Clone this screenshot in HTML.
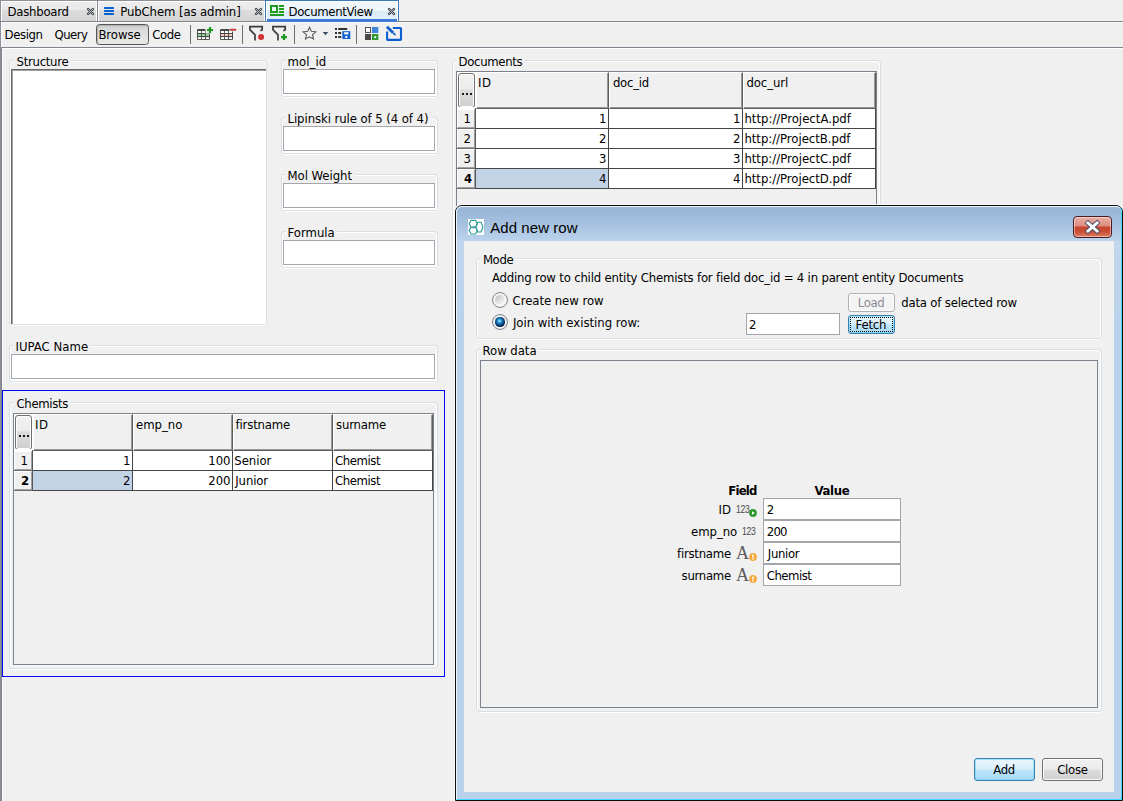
<!DOCTYPE html>
<html><head><meta charset="utf-8"><title>DocumentView</title><style>
*{box-sizing:border-box;margin:0;padding:0}
html,body{width:1123px;height:801px;overflow:hidden}
body{position:relative;background:#f0f0f0;font-family:"DejaVu Sans Condensed", "Liberation Sans", sans-serif;font-size:13px;color:#000;line-height:16px}
.a{position:absolute}
.t{position:absolute;white-space:nowrap;line-height:16px;height:16px;z-index:2}
.gs{position:absolute;border:1px solid #d5dfe5;border-radius:3px}
.gw{position:absolute;border:1px solid #fff;border-radius:3px}
.gt{position:absolute;background:#f0f0f0;height:12px}
.tf{position:absolute;background:#fff;border:1px solid #a5a6a9}
.hc{position:absolute;background:#f0f0f0;border-top:1px solid #fff;border-left:1px solid #fff;border-right:1px solid #5e5e5e;border-bottom:1px solid #5e5e5e;box-shadow:inset -1px -1px 0 #989898}
.rh{position:absolute;background:#f0f0f0;border-top:1px solid #fff;border-left:1px solid #fff;border-right:1px solid #a0a0a0;border-bottom:1px solid #a0a0a0}
.cell{position:absolute;background:#fff}
.btn{position:absolute;border:1px solid #707070;border-radius:3px;background:linear-gradient(#f2f2f2 0,#ebebeb 48%,#dddddd 52%,#cfcfcf 100%);box-shadow:inset 0 0 0 1px #fcfcfc}
</style></head>
<body>
<div class="a" style="left:0px;top:0px;width:1px;height:801px;background:#8c8f98"></div>
<div class="a" style="left:1px;top:0px;width:1px;height:47px;background:#fff"></div>
<div class="a" style="left:1px;top:47px;width:1px;height:754px;background:#7d828e"></div>
<div class="a" style="left:2px;top:48px;width:1px;height:753px;background:#fff"></div>
<div class="a" style="left:0px;top:0px;width:265px;height:1px;background:#8e9097"></div>
<div class="a" style="left:1px;top:1px;width:264px;height:1px;background:#fff"></div>
<div class="a" style="left:0px;top:21px;width:1123px;height:1px;background:#80848e"></div>
<div class="a" style="left:2px;top:22px;width:1121px;height:1px;background:#fafafa"></div>
<div class="a" style="left:2px;top:2px;width:94px;height:19px;background:linear-gradient(#ededed 0,#e9e9e9 42%,#dcdcdc 43%,#d4d4d4 100%)"></div>
<div class="a" style="left:96px;top:1px;width:1px;height:20px;background:#fff"></div>
<div class="a" style="left:97px;top:0px;width:1px;height:22px;background:#80848e"></div>
<div class="a" style="left:98px;top:1px;width:1px;height:20px;background:#fff"></div>
<div class="a" style="left:99px;top:2px;width:165px;height:19px;background:linear-gradient(#ededed 0,#e9e9e9 42%,#dcdcdc 43%,#d4d4d4 100%)"></div>
<div class="a" style="left:264px;top:1px;width:1px;height:20px;background:#fff"></div>
<div class="a" style="left:265px;top:0px;width:134px;height:21px;border:1px solid #3a7ab5;border-bottom:none;background:#fff"></div>
<div class="a" style="left:267px;top:2px;width:130px;height:19px;background:linear-gradient(#f1f8fc 0,#eef6fb 47%,#dcecf7 50%,#e2eff8 100%)"></div>
<div class="a" style="left:267px;top:19px;width:130px;height:3px;background:#3d7bd8"></div>
<div class="a" style="left:399px;top:0px;width:724px;height:21px;background:#f0f0f0"></div>
<svg class="a" style="left:86px;top:7px" width="9" height="9" viewBox="0 0 9 9"><path d="M2 2 L7 7 M7 2 L2 7" stroke="#3b3f4a" stroke-width="2.400" stroke-linecap="round" fill="none"/><path d="M2 2 L7 7 M7 2 L2 7" stroke="#e4e4e4" stroke-width=".7" stroke-linecap="round" fill="none"/></svg>
<svg class="a" style="left:254px;top:7px" width="9" height="9" viewBox="0 0 9 9"><path d="M2 2 L7 7 M7 2 L2 7" stroke="#3b3f4a" stroke-width="2.400" stroke-linecap="round" fill="none"/><path d="M2 2 L7 7 M7 2 L2 7" stroke="#e4e4e4" stroke-width=".7" stroke-linecap="round" fill="none"/></svg>
<svg class="a" style="left:387px;top:7px" width="9" height="9" viewBox="0 0 9 9"><path d="M2 2 L7 7 M7 2 L2 7" stroke="#3b3f4a" stroke-width="2.400" stroke-linecap="round" fill="none"/><path d="M2 2 L7 7 M7 2 L2 7" stroke="#e4e4e4" stroke-width=".7" stroke-linecap="round" fill="none"/></svg>
<div class="t" style="left:7.60px;top:4px;letter-spacing:-0.251px;">Dashboard</div>
<div class="t" style="left:120.20px;top:4px;letter-spacing:-0.103px;">PubChem [as admin]</div>
<div class="t" style="left:288.60px;top:4px;letter-spacing:-0.342px;">DocumentView</div>
<svg class="a" style="left:104px;top:7px" width="10" height="8" viewBox="0 0 10 8"><g fill="#0a62d0"><rect x="0" y="0" width="10" height="2" rx=".6"/><rect x="0" y="3" width="10" height="2" rx=".6"/><rect x="0" y="6" width="10" height="2" rx=".6"/></g></svg>
<svg class="a" style="left:270px;top:5px" width="14" height="11" viewBox="0 0 14 11"><g fill="#1e9a1e"><path d="M0 0H8V8H0Z M2 2V6H6V2Z" fill-rule="evenodd"/><rect x="9" y="0" width="5" height="2"/><rect x="9" y="3" width="5" height="2"/><rect x="9" y="6" width="5" height="2"/><rect x="0" y="9" width="14" height="2"/></g></svg>
<div class="a" style="left:1px;top:47px;width:1122px;height:1px;background:#80848e"></div>
<div class="a" style="left:2px;top:48px;width:1121px;height:1px;background:#fff"></div>
<div class="t" style="left:4.60px;top:27px;letter-spacing:-0.395px;">Design</div>
<div class="t" style="left:54.50px;top:27px;letter-spacing:-0.532px;">Query</div>
<div class="a" style="left:96px;top:24px;width:53px;height:21px;border:1px solid #565656;border-radius:3.500px;background:linear-gradient(#cdcdcd 0,#dcdcdc 25%,#e9e9e9 100%);box-shadow:inset 1px 1px 1px #b0b0b0"></div>
<div class="t" style="left:98.40px;top:27px;letter-spacing:-0.053px;">Browse</div>
<div class="t" style="left:152.30px;top:27px;letter-spacing:-0.418px;">Code</div>
<div class="a" style="left:190px;top:25px;width:1px;height:19px;background:#6e6e6e"></div>
<div class="a" style="left:242px;top:25px;width:1px;height:19px;background:#6e6e6e"></div>
<div class="a" style="left:294px;top:25px;width:1px;height:19px;background:#6e6e6e"></div>
<div class="a" style="left:356px;top:25px;width:1px;height:19px;background:#6e6e6e"></div>
<svg class="a" style="left:197px;top:27px" width="17" height="14" viewBox="0 0 17 14"><rect x="0" y="2" width="13" height="11" rx="1.200" fill="#474747"/><rect x="0.9" y="4.0" width="3.100" height="2" fill="#fff"/><rect x="4.85" y="4.0" width="3.100" height="2" fill="#fff"/><rect x="8.9" y="4.0" width="3.100" height="2" fill="#fff"/><rect x="0.9" y="7.0" width="3.100" height="2" fill="#8fd6a0"/><rect x="4.85" y="7.0" width="3.100" height="2" fill="#8fd6a0"/><rect x="8.9" y="7.0" width="3.100" height="2" fill="#8fd6a0"/><rect x="0.9" y="10.1" width="3.100" height="2" fill="#fff"/><rect x="4.85" y="10.1" width="3.100" height="2" fill="#fff"/><rect x="8.9" y="10.1" width="3.100" height="2" fill="#fff"/><rect x="8.500" y="0" width="8.500" height="6.500" fill="#f0f0f0"/><path d="M13 0 V6 M10 3 H16" stroke="#1e9622" stroke-width="2.200" fill="none"/></svg>
<svg class="a" style="left:220px;top:27px" width="17" height="14" viewBox="0 0 17 14"><rect x="0" y="2" width="13" height="11" rx="1.200" fill="#474747"/><rect x="0.9" y="4.0" width="3.100" height="2" fill="#fff"/><rect x="4.85" y="4.0" width="3.100" height="2" fill="#fff"/><rect x="8.9" y="4.0" width="3.100" height="2" fill="#fff"/><rect x="0.9" y="7.0" width="3.100" height="2" fill="#f6c8c0"/><rect x="4.85" y="7.0" width="3.100" height="2" fill="#f6c8c0"/><rect x="8.9" y="7.0" width="3.100" height="2" fill="#f6c8c0"/><rect x="0.9" y="10.1" width="3.100" height="2" fill="#fff"/><rect x="4.85" y="10.1" width="3.100" height="2" fill="#fff"/><rect x="8.9" y="10.1" width="3.100" height="2" fill="#fff"/><rect x="9.500" y="0" width="7.500" height="4.500" fill="#f0f0f0"/><rect x="10" y="1.800" width="6.200" height="1.900" fill="#cf3838"/></svg>
<svg class="a" style="left:249px;top:25px" width="17" height="17" viewBox="0 0 17 17"><path d="M11.400 5.800 L13.200 4.800 V1.700 H0.900 V4.600 L6 9.800 V15.400" stroke="#3c3c3c" stroke-width="1.700" fill="none" stroke-linejoin="miter"/><circle cx="12.100" cy="11.900" r="3" fill="#d03034"/></svg>
<svg class="a" style="left:272px;top:25px" width="17" height="17" viewBox="0 0 17 17"><path d="M11.400 5.800 L13.200 4.800 V1.700 H0.900 V4.600 L6 9.800 V15.400" stroke="#3c3c3c" stroke-width="1.700" fill="none" stroke-linejoin="miter"/><path d="M12 9.100 V15.100 M9 12.100 H15" stroke="#1e9622" stroke-width="2.200" fill="none"/></svg>
<svg class="a" style="left:301px;top:25px" width="17" height="16" viewBox="0 0 17 16"><path d="M8.500 2.300 L10.300 6.300 L14.900 6.800 L11.500 9.700 L12.500 14 L8.500 11.800 L4.500 14 L5.500 9.700 L2.100 6.800 L6.700 6.300 Z" fill="none" stroke="#5a5a5a" stroke-width="1.100" stroke-linejoin="miter"/></svg>
<svg class="a" style="left:322px;top:32px" width="7" height="4" viewBox="0 0 7 4"><path d="M0.700 0 H6.300 L3.500 3.300Z" fill="#3b4a63"/></svg>
<svg class="a" style="left:335px;top:27px" width="16" height="13" viewBox="0 0 16 13"><g fill="#333"><rect x="0" y="1" width="2" height="2"/><rect x="0" y="5" width="2" height="2"/><rect x="0" y="9" width="2" height="2"/><rect x="3.200" y="1" width="9" height="2"/><rect x="3.200" y="5" width="3" height="2"/><rect x="3.200" y="9" width="3" height="2"/></g><rect x="7.300" y="4.200" width="8" height="7.800" fill="#1262d3"/><rect x="9.200" y="5.200" width="4.200" height="2.200" fill="#fff"/><rect x="10.300" y="9" width="2" height="2" fill="#fff"/></svg>
<svg class="a" style="left:365px;top:27px" width="14" height="13" viewBox="0 0 14 13"><rect x="0.500" y="0.500" width="5" height="5" fill="#fff" stroke="#555" stroke-width="1"/><rect x="7" y="0" width="6.300" height="6" fill="#3d86db"/><rect x="0" y="7" width="6" height="6" fill="#4a4a4a"/><rect x="7" y="7" width="6.300" height="6" fill="#2a9a2e"/><rect x="9.200" y="9.200" width="2" height="2" fill="#fff"/></svg>
<svg class="a" style="left:385px;top:25px" width="18" height="17" viewBox="0 0 18 17"><path d="M7.900 3 H15.200 Q16 3 16 3.800 V14.100 Q16 14.900 15.200 14.900 H2.900 Q2.100 14.900 2.100 14.100 V6.500" fill="none" stroke="#0a5fd0" stroke-width="2.100"/><path d="M1.900 1.700 L8.100 7.800" stroke="#0a5fd0" stroke-width="2.700"/><path d="M8.700 8.400 L10 9.600" stroke="#0a5fd0" stroke-width="1.700" stroke-linecap="round"/></svg>
<div class="gw" style="left:10px;top:61px;width:256px;height:265px;"></div>
<div class="gs" style="left:9px;top:60px;width:258px;height:265px;"></div>
<div class="gt" style="left:14px;top:56px;width:57px;height:8px;"></div>
<div class="t" style="left:16.50px;top:54px;letter-spacing:-0.272px;">Structure</div>
<div class="a" style="left:11px;top:69px;width:255px;height:255px;background:#fff;border-top:2px solid;border-left:2px solid;border-color:#696969;box-shadow:inset 1px 1px 0 #a0a0a000"></div>
<div class="a" style="left:11px;top:69px;width:255px;height:1px;background:#696969"></div>
<div class="a" style="left:12px;top:70px;width:254px;height:1px;background:#a0a0a0"></div>
<div class="a" style="left:11px;top:69px;width:1px;height:255px;background:#696969"></div>
<div class="a" style="left:12px;top:70px;width:1px;height:254px;background:#a0a0a0"></div>
<div class="gw" style="left:282px;top:61px;width:155px;height:37px;"></div>
<div class="gs" style="left:281px;top:60px;width:157px;height:37px;"></div>
<div class="gt" style="left:286px;top:56px;width:42px;height:8px;"></div>
<div class="t" style="left:287.50px;top:54px;letter-spacing:0.060px;">mol_id</div>
<div class="a" style="left:283px;top:69px;width:154px;height:27px;background:#fff"></div>
<div class="tf" style="left:283px;top:69px;width:152px;height:25px;"></div>
<div class="gw" style="left:282px;top:118px;width:155px;height:37px;"></div>
<div class="gs" style="left:281px;top:117px;width:157px;height:37px;"></div>
<div class="gt" style="left:286px;top:113px;width:144px;height:8px;"></div>
<div class="t" style="left:287.50px;top:111px;letter-spacing:-0.075px;">Lipinski rule of 5 (4 of 4)</div>
<div class="a" style="left:283px;top:126px;width:154px;height:27px;background:#fff"></div>
<div class="tf" style="left:283px;top:126px;width:152px;height:25px;"></div>
<div class="gw" style="left:282px;top:175px;width:155px;height:37px;"></div>
<div class="gs" style="left:281px;top:174px;width:157px;height:37px;"></div>
<div class="gt" style="left:286px;top:170px;width:69px;height:8px;"></div>
<div class="t" style="left:287.50px;top:168px;letter-spacing:-0.045px;">Mol Weight</div>
<div class="a" style="left:283px;top:183px;width:154px;height:27px;background:#fff"></div>
<div class="tf" style="left:283px;top:183px;width:152px;height:25px;"></div>
<div class="gw" style="left:282px;top:232px;width:155px;height:37px;"></div>
<div class="gs" style="left:281px;top:231px;width:157px;height:37px;"></div>
<div class="gt" style="left:286px;top:227px;width:51px;height:8px;"></div>
<div class="t" style="left:287.50px;top:225px;letter-spacing:0.005px;">Formula</div>
<div class="a" style="left:283px;top:240px;width:154px;height:27px;background:#fff"></div>
<div class="tf" style="left:283px;top:240px;width:152px;height:25px;"></div>
<div class="gw" style="left:10px;top:346px;width:427px;height:37px;"></div>
<div class="gs" style="left:9px;top:345px;width:429px;height:37px;"></div>
<div class="gt" style="left:14px;top:341px;width:76px;height:8px;"></div>
<div class="t" style="left:15.40px;top:339px;letter-spacing:0.045px;">IUPAC Name</div>
<div class="a" style="left:11px;top:354px;width:426px;height:27px;background:#fff"></div>
<div class="tf" style="left:11px;top:354px;width:424px;height:25px;"></div>
<div class="a" style="left:2px;top:390px;width:443px;height:287px;border:1px solid #0000ff"></div>
<div class="gw" style="left:10px;top:403px;width:427px;height:267px;"></div>
<div class="gs" style="left:9px;top:402px;width:429px;height:267px;"></div>
<div class="gt" style="left:14px;top:398px;width:57px;height:8px;"></div>
<div class="t" style="left:16.50px;top:396px;letter-spacing:-0.344px;">Chemists</div>
<div class="a" style="left:13px;top:413px;width:423px;height:254px;background:#f6f6f6"></div>
<div class="a" style="left:13px;top:413px;width:421px;height:252px;border:1px solid #7b828e;background:#f0f0f0"></div>
<div class="a" style="left:14px;top:414px;width:419px;height:36px;background:#fff"></div>
<div class="btn" style="left:15px;top:415px;width:17px;height:35px;border-radius:3px;background:linear-gradient(#f2f2f2 0,#ebebeb 45%,#dddddd 48%,#cfcfcf 100%)"></div>
<div class="a" style="left:19px;top:435px;width:2px;height:2px;background:#1a1a1a"></div>
<div class="a" style="left:23px;top:435px;width:2px;height:2px;background:#1a1a1a"></div>
<div class="a" style="left:27px;top:435px;width:2px;height:2px;background:#1a1a1a"></div>
<div class="a" style="left:32px;top:450px;width:401px;height:41px;background:#444"></div>
<div class="a" style="left:14px;top:470px;width:18px;height:21px;background:#707070"></div>
<div class="a" style="left:32px;top:450px;width:1px;height:41px;background:#585858"></div>
<div class="a" style="left:14px;top:449px;width:18px;height:2px;background:#fff"></div>
<div class="hc" style="left:33px;top:414px;width:100px;height:37px;"></div>
<div class="t" style="left:35.10px;top:417px;letter-spacing:0.439px;">ID</div>
<div class="hc" style="left:133px;top:414px;width:100px;height:37px;"></div>
<div class="t" style="left:136.10px;top:417px;letter-spacing:-0.037px;">emp_no</div>
<div class="hc" style="left:233px;top:414px;width:100px;height:37px;"></div>
<div class="t" style="left:235.60px;top:417px;letter-spacing:-0.179px;">firstname</div>
<div class="hc" style="left:333px;top:414px;width:100px;height:37px;"></div>
<div class="t" style="left:336.00px;top:417px;letter-spacing:-0.178px;">surname</div>
<div class="rh" style="left:14px;top:451px;width:18px;height:19px;"></div>
<div class="t" style="left:20.59px;top:453px;">1</div>
<div class="cell" style="left:33px;top:451px;width:99px;height:19px;background:#fff"></div>
<div class="t" style="left:123.09px;top:453px;">1</div>
<div class="cell" style="left:133px;top:451px;width:99px;height:19px;background:#fff"></div>
<div class="t" style="left:208.21px;top:453px;">100</div>
<div class="cell" style="left:233px;top:451px;width:99px;height:19px;background:#fff"></div>
<div class="t" style="left:234.30px;top:453px;letter-spacing:-0.029px;">Senior</div>
<div class="cell" style="left:333px;top:451px;width:99px;height:19px;background:#fff"></div>
<div class="t" style="left:335.10px;top:453px;letter-spacing:-0.438px;">Chemist</div>
<div class="rh" style="left:14px;top:471px;width:18px;height:19px;"></div>
<div class="t" style="left:21.00px;top:473px;font-weight:bold;">2</div>
<div class="cell" style="left:33px;top:471px;width:99px;height:19px;background:#c3d3e6"></div>
<div class="t" style="left:123.09px;top:473px;">2</div>
<div class="cell" style="left:133px;top:471px;width:99px;height:19px;background:#fff"></div>
<div class="t" style="left:208.21px;top:473px;">200</div>
<div class="cell" style="left:233px;top:471px;width:99px;height:19px;background:#fff"></div>
<div class="t" style="left:235.30px;top:473px;letter-spacing:-0.136px;">Junior</div>
<div class="cell" style="left:333px;top:471px;width:99px;height:19px;background:#fff"></div>
<div class="t" style="left:335.10px;top:473px;letter-spacing:-0.438px;">Chemist</div>
<div class="gw" style="left:453px;top:61px;width:427px;height:267px;"></div>
<div class="gs" style="left:452px;top:60px;width:429px;height:267px;"></div>
<div class="gt" style="left:457px;top:56px;width:68px;height:8px;"></div>
<div class="t" style="left:458.60px;top:54px;letter-spacing:-0.339px;">Documents</div>
<div class="a" style="left:456px;top:71px;width:423px;height:254px;background:#f6f6f6"></div>
<div class="a" style="left:456px;top:71px;width:421px;height:252px;border:1px solid #7b828e;background:#f0f0f0"></div>
<div class="a" style="left:457px;top:72px;width:419px;height:36px;background:#fff"></div>
<div class="btn" style="left:458px;top:73px;width:17px;height:35px;border-radius:3px;background:linear-gradient(#f2f2f2 0,#ebebeb 45%,#dddddd 48%,#cfcfcf 100%)"></div>
<div class="a" style="left:462px;top:93px;width:2px;height:2px;background:#1a1a1a"></div>
<div class="a" style="left:466px;top:93px;width:2px;height:2px;background:#1a1a1a"></div>
<div class="a" style="left:470px;top:93px;width:2px;height:2px;background:#1a1a1a"></div>
<div class="a" style="left:475px;top:108px;width:401px;height:81px;background:#444"></div>
<div class="a" style="left:457px;top:128px;width:18px;height:61px;background:#707070"></div>
<div class="a" style="left:475px;top:108px;width:1px;height:81px;background:#585858"></div>
<div class="a" style="left:457px;top:107px;width:18px;height:2px;background:#fff"></div>
<div class="hc" style="left:476px;top:72px;width:133px;height:37px;"></div>
<div class="t" style="left:478.10px;top:75px;letter-spacing:0.439px;">ID</div>
<div class="hc" style="left:609px;top:72px;width:134px;height:37px;"></div>
<div class="t" style="left:612.90px;top:75px;letter-spacing:-0.244px;">doc_id</div>
<div class="hc" style="left:743px;top:72px;width:133px;height:37px;"></div>
<div class="t" style="left:746.40px;top:75px;letter-spacing:-0.063px;">doc_url</div>
<div class="rh" style="left:457px;top:109px;width:18px;height:19px;"></div>
<div class="t" style="left:463.59px;top:111px;">1</div>
<div class="cell" style="left:476px;top:109px;width:132px;height:19px;background:#fff"></div>
<div class="t" style="left:599.09px;top:111px;">1</div>
<div class="cell" style="left:609px;top:109px;width:133px;height:19px;background:#fff"></div>
<div class="t" style="left:733.09px;top:111px;">1</div>
<div class="cell" style="left:743px;top:109px;width:132px;height:19px;background:#fff"></div>
<div class="t" style="left:744.40px;top:111px;letter-spacing:0.015px;">http://ProjectA.pdf</div>
<div class="rh" style="left:457px;top:129px;width:18px;height:19px;"></div>
<div class="t" style="left:463.59px;top:131px;">2</div>
<div class="cell" style="left:476px;top:129px;width:132px;height:19px;background:#fff"></div>
<div class="t" style="left:599.09px;top:131px;">2</div>
<div class="cell" style="left:609px;top:129px;width:133px;height:19px;background:#fff"></div>
<div class="t" style="left:733.09px;top:131px;">2</div>
<div class="cell" style="left:743px;top:129px;width:132px;height:19px;background:#fff"></div>
<div class="t" style="left:744.40px;top:131px;letter-spacing:-0.027px;">http://ProjectB.pdf</div>
<div class="rh" style="left:457px;top:149px;width:18px;height:19px;"></div>
<div class="t" style="left:463.59px;top:151px;">3</div>
<div class="cell" style="left:476px;top:149px;width:132px;height:19px;background:#fff"></div>
<div class="t" style="left:599.09px;top:151px;">3</div>
<div class="cell" style="left:609px;top:149px;width:133px;height:19px;background:#fff"></div>
<div class="t" style="left:733.09px;top:151px;">3</div>
<div class="cell" style="left:743px;top:149px;width:132px;height:19px;background:#fff"></div>
<div class="t" style="left:744.40px;top:151px;letter-spacing:-0.007px;">http://ProjectC.pdf</div>
<div class="rh" style="left:457px;top:169px;width:18px;height:19px;"></div>
<div class="t" style="left:464.00px;top:171px;font-weight:bold;">4</div>
<div class="cell" style="left:476px;top:169px;width:132px;height:19px;background:#c3d3e6"></div>
<div class="t" style="left:599.09px;top:171px;">4</div>
<div class="cell" style="left:609px;top:169px;width:133px;height:19px;background:#fff"></div>
<div class="t" style="left:733.09px;top:171px;">4</div>
<div class="cell" style="left:743px;top:169px;width:132px;height:19px;background:#fff"></div>
<div class="t" style="left:744.40px;top:171px;letter-spacing:-0.026px;">http://ProjectD.pdf</div>
<div class="a" style="left:454px;top:204px;width:669px;height:597px;border:1px solid #fbfbfb;border-right:none;border-bottom:none;border-radius:8px 8px 0 0"></div>
<div class="a" style="left:455px;top:205px;width:668px;height:596px;border:1px solid #0c0c0c;border-radius:7px 7px 0 0;background:#b9d1ea"></div>
<div class="a" style="left:456px;top:206px;width:666px;height:594px;border:1px solid #eef4fb;border-right-color:#3bdcff;border-bottom-color:#3bdcff;border-radius:6px 6px 0 0"></div>
<div class="a" style="left:457px;top:207px;width:664px;height:34px;border-radius:5px 5px 0 0;background:linear-gradient(#9cb8d9 0,#9ab6d7 12%,#a6c1e0 50%,#bbd3ec 100%)"></div>
<div class="a" style="left:457px;top:241px;width:664px;height:90px;background:linear-gradient(#c1d7ee,#b9d1ea)"></div>
<div class="a" style="left:464px;top:241px;width:650px;height:551px;background:#f0f0f0"></div>
<svg class="a" style="left:468px;top:219px" width="16" height="16" viewBox="0 0 16 16"><rect width="16" height="16" fill="#fff"/><rect x="4.600" y="6.400" width="1.800" height="3.600" fill="#c3cce6"/><g fill="none" stroke="#2a9a94" stroke-width="1.100" stroke-linejoin="round"><path d="M3 1.400 H7.600 L9.400 4.800 L7.600 8.200 H3 L1.200 4.800Z"/><path d="M3 8.200 H7.600 L9.400 11.600 L7.600 15 H3 L1.200 11.600Z"/><path d="M9.700 3.200 H13 L15 8.100 L13 13 H9.700 L7.700 8.100Z"/></g></svg>
<div class="t" style="left:490.20px;top:219px;letter-spacing:0.071px;font-size:15px;line-height:18px;height:18px;font-family:'Liberation Sans',sans-serif;">Add new row</div>
<div class="a" style="left:1073px;top:216px;width:39px;height:22px;border:1px solid #4b1a24;border-radius:4px;background:linear-gradient(#eaaea2 0,#dd8d7f 45%,#c4442a 50%,#c94f37 75%,#dc8066 100%);box-shadow:inset 0 0 0 1px rgba(255,255,255,.45)"></div>
<svg class="a" style="left:1085px;top:220px" width="15" height="14" viewBox="0 0 15 14"><path d="M3 3 L12 11 M12 3 L3 11" stroke="#46506a" stroke-width="4.800" stroke-linecap="square"/><path d="M3 3 L12 11 M12 3 L3 11" stroke="#fff" stroke-width="3" stroke-linecap="square"/></svg>
<div class="gw" style="left:477px;top:259px;width:624px;height:81px;"></div>
<div class="gs" style="left:476px;top:258px;width:626px;height:81px;"></div>
<div class="gt" style="left:481px;top:254px;width:35px;height:8px;"></div>
<div class="t" style="left:482.90px;top:252px;letter-spacing:-0.359px;">Mode</div>
<div class="t" style="left:492.00px;top:270px;letter-spacing:-0.192px;">Adding row to child entity Chemists for field doc_id = 4 in parent entity Documents</div>
<div class="a" style="left:492px;top:292px;width:16px;height:16px;border-radius:50%;border:1px solid #888a8c;background:#fff;box-shadow:inset 0 0 0 1px #e4e4e4"></div>
<div class="a" style="left:495px;top:295px;width:10px;height:10px;border-radius:50%;background:linear-gradient(135deg,#bdbdbd 5%,#dedede 45%,#f8f8f8 90%)"></div>
<div class="t" style="left:512.60px;top:293px;letter-spacing:-0.056px;">Create new row</div>
<div class="a" style="left:492px;top:314px;width:16px;height:16px;border-radius:50%;border:1px solid #7c8590;background:#fff;box-shadow:inset 0 0 0 1px #e4e4e4"></div>
<div class="a" style="left:495.400px;top:317.400px;width:9.200px;height:9.200px;border-radius:50%;background:radial-gradient(circle at 45% 40%,#c8f2ff 0,#38a8e4 18%,#1565a8 38%,#0a3364 58%,#061c3c 80%,#061c3c 100%)"></div>
<div class="t" style="left:512.90px;top:315px;letter-spacing:-0.012px;">Join with existing row:</div>
<div class="tf" style="left:746px;top:313px;width:94px;height:22px;"></div>
<div class="t" style="left:749.10px;top:317px;">2</div>
<div class="a" style="left:848px;top:293px;width:47px;height:19px;border:1px solid #adb2b5;border-radius:3px;background:#f4f4f4;box-shadow:inset 0 0 0 1px #fcfcfc"></div>
<div class="t" style="left:857.80px;top:295px;letter-spacing:-0.368px;color:#8a8a96;">Load</div>
<div class="t" style="left:901.20px;top:295px;letter-spacing:-0.179px;">data of selected row</div>
<div class="a" style="left:848px;top:315px;width:47px;height:19px;border:1px solid #3c7fb1;border-radius:3px;background:linear-gradient(#e8f5fc 0,#d9effb 48%,#bfe4f9 52%,#a9d9f2 100%);box-shadow:inset 0 0 0 1px rgba(72,216,251,.45)"></div>
<div class="a" style="left:850px;top:317px;width:43px;height:15px;border:1px dotted #000"></div>
<div class="t" style="left:855.60px;top:317px;letter-spacing:-0.211px;">Fetch</div>
<div class="gw" style="left:477px;top:350px;width:624px;height:363px;"></div>
<div class="gs" style="left:476px;top:349px;width:626px;height:363px;"></div>
<div class="gt" style="left:481px;top:345px;width:58px;height:8px;"></div>
<div class="t" style="left:482.60px;top:343px;letter-spacing:-0.052px;">Row data</div>
<div class="a" style="left:480px;top:360px;width:618px;height:348px;border:1px solid #7b828e"></div>
<div class="t" style="left:728.30px;top:483px;letter-spacing:-0.800px;font-weight:bold;">Field</div>
<div class="t" style="left:814.50px;top:483px;letter-spacing:-0.341px;font-weight:bold;">Value</div>
<div class="tf" style="left:763px;top:498px;width:138px;height:22px;"></div>
<div class="t" style="left:766.80px;top:502px;">2</div>
<div class="t" style="left:718.50px;top:502px;">ID</div>
<div class="t" style="left:736px;top:501px;font-family:'Liberation Sans',sans-serif;font-size:11px;letter-spacing:-.3px;color:#4a4a4a;transform:scaleX(.78);transform-origin:left">123</div>
<svg class="a" style="left:749px;top:509px" width="8" height="8" viewBox="0 0 8 8"><circle cx="4" cy="4" r="3.900" fill="#2e9a2e"/><path d="M3 2.200 L5.800 4 L3 5.800Z" fill="#fff"/></svg>
<div class="tf" style="left:763px;top:520px;width:138px;height:22px;"></div>
<div class="t" style="left:766.80px;top:524px;letter-spacing:-0.800px;">200</div>
<div class="t" style="left:691.10px;top:524px;letter-spacing:-0.057px;">emp_no</div>
<div class="t" style="left:742px;top:523px;font-family:'Liberation Sans',sans-serif;font-size:11px;letter-spacing:-.3px;color:#4a4a4a;transform:scaleX(.78);transform-origin:left">123</div>
<div class="tf" style="left:763px;top:542px;width:138px;height:22px;"></div>
<div class="t" style="left:767.80px;top:546px;letter-spacing:-0.336px;">Junior</div>
<div class="t" style="left:677.10px;top:546px;letter-spacing:-0.254px;">firstname</div>
<div class="t" style="left:736px;top:545px;font-family:'Liberation Serif',serif;font-size:18px;color:#5c5c5c">A</div>
<svg class="a" style="left:749px;top:553px" width="8" height="8" viewBox="0 0 8 8"><circle cx="4" cy="4" r="3.900" fill="#f5a940"/><rect x="3.300" y="1.500" width="1.400" height="3.200" fill="#fff"/><rect x="3.300" y="5.400" width="1.400" height="1.300" fill="#fff"/></svg>
<div class="tf" style="left:763px;top:564px;width:138px;height:22px;"></div>
<div class="t" style="left:766.80px;top:568px;letter-spacing:-0.504px;">Chemist</div>
<div class="t" style="left:681.60px;top:568px;letter-spacing:-0.295px;">surname</div>
<div class="t" style="left:736px;top:567px;font-family:'Liberation Serif',serif;font-size:18px;color:#5c5c5c">A</div>
<svg class="a" style="left:749px;top:575px" width="8" height="8" viewBox="0 0 8 8"><circle cx="4" cy="4" r="3.900" fill="#f5a940"/><rect x="3.300" y="1.500" width="1.400" height="3.200" fill="#fff"/><rect x="3.300" y="5.400" width="1.400" height="1.300" fill="#fff"/></svg>
<div class="a" style="left:974px;top:758px;width:61px;height:23px;border:1px solid #3c7fb1;border-radius:3px;background:linear-gradient(#eaf6fd 0,#d9f0fc 48%,#bee6fd 52%,#a7d9f5 100%);box-shadow:inset 0 0 0 1px rgba(111,214,247,.6)"></div>
<div class="t" style="left:993.20px;top:762px;letter-spacing:-0.299px;">Add</div>
<div class="btn" style="left:1042px;top:758px;width:61px;height:23px;"></div>
<div class="t" style="left:1057.20px;top:762px;letter-spacing:-0.294px;">Close</div>
</body></html>
